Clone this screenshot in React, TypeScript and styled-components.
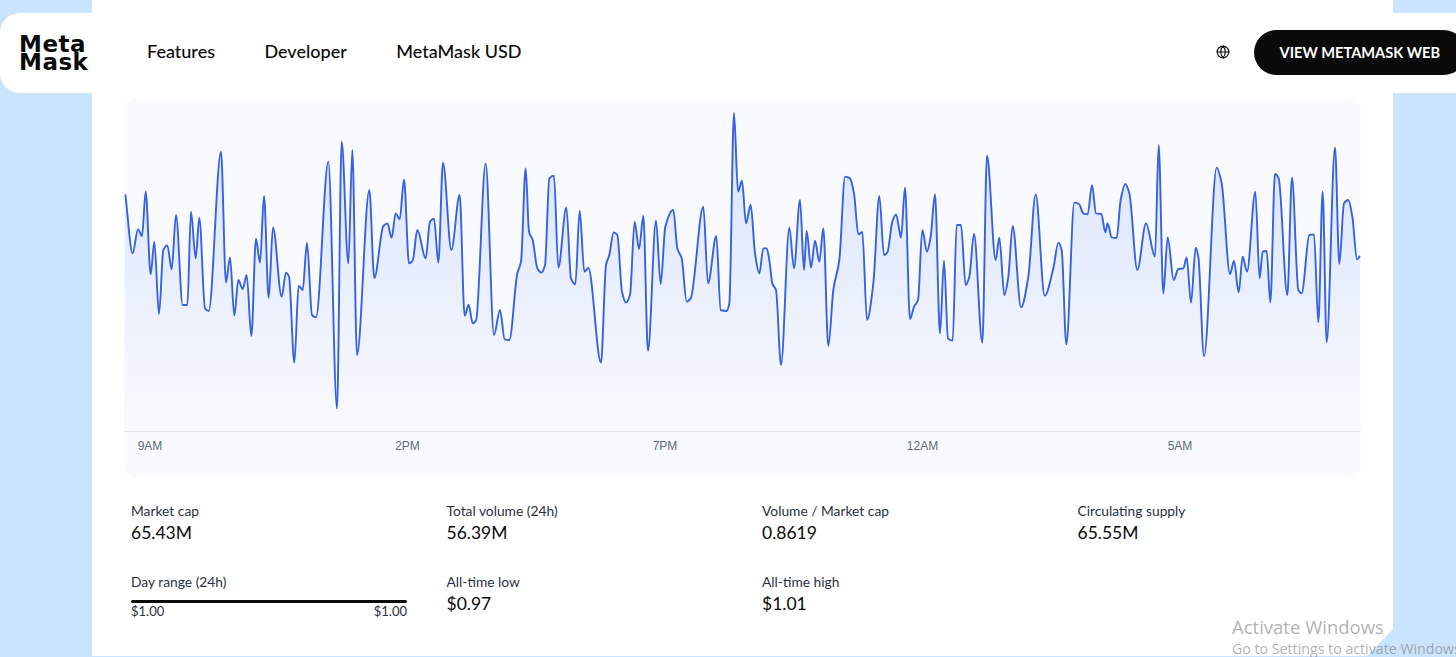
import React from "react";
import styled, { createGlobalStyle } from "styled-components";
import { Globe } from "lucide-react";

const GlobalStyle = createGlobalStyle`
  html, body { margin: 0; padding: 0; background: #cbe4fd; }
  body { font-family: "Lato", "Noto Sans", sans-serif; color: #0a0a0a; }
  #root { width: 1456px; height: 657px; overflow: hidden; position: relative; }
`;

const Page = styled.div`
  position: relative;
  width: 1456px;
  height: 657px;
  overflow: hidden;
  background: #cbe4fd;
`;

const Sheet = styled.main`
  box-sizing: border-box;
  width: 1301px;
  height: 656px;
  margin-left: 92px;
  padding: 99px 32px 0;
  background: #fff;
  clip-path: polygon(0 0, 100% 0, 100% 629px, 1275px 100%, 0 100%);
`;

const Nav = styled.header`
  position: absolute;
  top: 13px;
  left: 0;
  right: -40px;
  height: 80px;
  box-sizing: border-box;
  padding: 0 30px 2px 19px;
  display: flex;
  align-items: center;
  background: #fff;
  border-radius: 20px;
`;

const Logo = styled.div`
  width: 71px;
  margin-right: 57px;
  padding-top: 2px;
  font-family: "DejaVu Sans", "Noto Sans", sans-serif;
  font-size: 23px;
  font-weight: 700;
  line-height: 18px;
  letter-spacing: 0.5px;
  color: #0a0a0a;
`;

const NavLinks = styled.nav`
  display: flex;
  gap: 49.5px;
  padding-bottom: 2px;
`;

const NavLink = styled.a`
  font-size: 18px;
  font-weight: 500;
  color: #0a0a0a;
`;

const NavRight = styled.div`
  margin-left: auto;
  display: flex;
  align-items: center;
  gap: 24px;
`;

const GlobeIcon = styled(Globe)`
  width: 14px;
  height: 14px;
  stroke-width: 2;
  color: #0a0a0a;
`;

const CtaButton = styled.button`
  height: 45px;
  padding: 0 26px;
  border: 0;
  border-radius: 23px;
  background: #0a0a0a;
  color: #fff;
  font-family: inherit;
  font-size: 14.6px;
  font-weight: 700;
  white-space: nowrap;
`;

const ChartCard = styled.section`
  height: 378px;
  border-radius: 12px;
  background: #f9fafe;
  overflow: hidden;
`;

const ChartSvg = styled.svg`
  display: block;
  width: 1237px;
  height: 332px;
`;

const Axis = styled.div`
  box-sizing: border-box;
  height: 30px;
  padding: 7px 0 0 26px;
  display: flex;
  gap: 257.5px;
  border-top: 1px solid #e3e6ee;
`;

const Tick = styled.span`
  width: 0;
  display: flex;
  justify-content: center;
  white-space: nowrap;
  font-family: "Liberation Sans", Arial, sans-serif;
  font-size: 12px;
  line-height: 14px;
  color: #5e6a7d;
`;

const Stats = styled.section`
  display: grid;
  grid-template-columns: repeat(4, 315.5px);
  row-gap: 21px;
  padding: 25px 7px 0;
`;

const Stat = styled.div`
  display: flex;
  flex-direction: column;
  height: 50px;
`;

const Label = styled.span`
  font-size: 13.8px;
  line-height: 17px;
  color: #2b3040;
`;

const Value = styled.span`
  margin-top: 3px;
  font-size: 17.5px;
  line-height: 22px;
  color: #0a0a0a;
`;

const RangeCell = styled.div`
  width: 276px;
  display: flex;
  flex-direction: column;
`;

const RangeBar = styled.div`
  height: 3px;
  margin-top: 10px;
  border-radius: 2px;
  background: #0a0a0a;
`;

const RangeEnds = styled.div`
  display: flex;
  justify-content: space-between;
  font-size: 13px;
  line-height: 17px;
  color: #2b3040;
`;

const Watermark = styled.aside`
  position: absolute;
  left: 1232px;
  top: 614px;
  width: 240px;
  font-family: "Open Sans", "Noto Sans", sans-serif;
  color: rgba(110, 110, 110, 0.55);
  white-space: nowrap;
`;

const WatermarkTitle = styled.div`
  font-size: 18.5px;
  line-height: 25px;
`;

const WatermarkHint = styled.div`
  font-size: 14.2px;
  line-height: 20px;
`;

type Segment = { ox: number; pts: number[] };

const segments: Segment[] = [
  { ox: 110, pts: [46,283,68,460,84,388,96,408,107,275,122,523,133,425,147,642,160,450,172,436,185,508,198,345,218,615,232,615,243,335,257,475,268,354,285,625,296,633,333,155,348,547,360,472,373,647,385,540,398,567,410,525,424,708,438,416,450,488,462,288,476,594,489,382,515,590,528,518,537,530,553,788,566,557,578,570,591,428,606,645,618,652,655,185,681,926,695,125,715,490,727,150,741,765,778,270,793,534,820,378,832,370,845,413,857,340,869,358,882,238,897,490,908,482,922,390,947,475] },
  { ox: 420, pts: [30,365,42,356,55,488,69,188,94,450,119,285,134,647,146,614,158,670,168,662,197,190,222,705,240,630,254,718,268,720,292,520,303,485,317,205,327,395,338,420,352,505,364,518,375,495,388,235,402,227,415,503,439,322,453,535,466,553,479,332,493,515,505,504,543,788,558,495,568,465,581,397,592,405,606,575,618,608,630,585,644,365,657,447,670,348,684,752,708,362,722,552,736,380,760,330,772,445,785,475,800,605,812,595,850,320,864,550,889,408,902,630,920,633,928,610] },
  { ox: 730, pts: [12,38,24,275,36,242,48,370,62,314,75,460,88,520,100,445,110,445,118,480,127,550,138,570,153,795,178,383,192,505,210,300,222,510,230,393,243,503,255,422,268,485,280,385,295,738,310,570,328,480,345,230,360,235,372,280,385,403,397,396,411,660,430,550,448,288,462,465,472,458,487,365,498,343,507,385,513,413,525,263,540,657,552,620,564,600,577,390,591,455,602,410,615,283,630,700,642,482,654,715,668,722,680,375,693,375,707,555,718,530,732,402,757,728,771,167,797,480,808,413,823,585,835,530,848,378,873,622,895,530,917,283] },
  { ox: 1040, pts: [14,587,40,505,55,428,65,450,79,733,103,308,117,312,130,340,143,343,156,255,168,340,184,342,196,397,203,370,215,412,230,414,242,300,256,252,268,280,292,510,318,370,345,470,356,135,370,580,383,412,401,540,415,507,430,505,440,472,453,608,467,443,475,470,492,768,530,203,545,250,570,522,582,483,596,577,608,470,621,515,646,275,659,535,668,455,680,453,691,607,705,222,716,235,742,585,756,233,775,570,785,580,808,405,822,403,835,667,848,275,860,727,885,142,898,492,912,310,925,300,937,350,951,478,960,468] },
];

// Points in chart coordinates (the card's top-left is at 124,99 on the page).
const points: [number, number][] = segments.flatMap(({ ox, pts }) => {
  const out: [number, number][] = [];
  for (let i = 0; i < pts.length; i += 2) {
    out.push([ox + pts[i] / 3 - 124, 100 + pts[i + 1] / 3 - 99]);
  }
  return out;
});

// Monotone cubic interpolation, so that peaks stay at the measured points.
function monotonePath(p: [number, number][]): string {
  const n = p.length;
  const slopes: number[] = [];
  for (let i = 0; i < n - 1; i++) {
    slopes.push((p[i + 1][1] - p[i][1]) / (p[i + 1][0] - p[i][0]));
  }
  const tangents: number[] = [slopes[0]];
  for (let i = 1; i < n - 1; i++) {
    const a = slopes[i - 1];
    const b = slopes[i];
    if (a * b <= 0) tangents.push(0);
    else {
      const h0 = p[i][0] - p[i - 1][0];
      const h1 = p[i + 1][0] - p[i][0];
      tangents.push((3 * (h0 + h1)) / ((2 * h1 + h0) / a + (h1 + 2 * h0) / b));
    }
  }
  tangents.push(slopes[n - 2]);
  let d = `M${p[0][0].toFixed(2)} ${p[0][1].toFixed(2)}`;
  for (let i = 0; i < n - 1; i++) {
    const h = (p[i + 1][0] - p[i][0]) / 3;
    d += `C${(p[i][0] + h).toFixed(2)} ${(p[i][1] + h * tangents[i]).toFixed(2)} ${(p[i + 1][0] - h).toFixed(2)} ${(p[i + 1][1] - h * tangents[i + 1]).toFixed(2)} ${p[i + 1][0].toFixed(2)} ${p[i + 1][1].toFixed(2)}`;
  }
  return d;
}

const linePath = monotonePath(points);
const areaPath = `${linePath}L${points[points.length - 1][0].toFixed(2)} 332L${points[0][0].toFixed(2)} 332Z`;

const ticks = ["9AM", "2PM", "7PM", "12AM", "5AM"];

const topStats = [
  { label: "Market cap", value: "65.43M" },
  { label: "Total volume (24h)", value: "56.39M" },
  { label: "Volume / Market cap", value: "0.8619" },
  { label: "Circulating supply", value: "65.55M" },
];

const bottomStats = [
  { label: "All-time low", value: "$0.97" },
  { label: "All-time high", value: "$1.01" },
];

export default function App() {
  return (
    <Page>
      <GlobalStyle />
      <Sheet>
        <ChartCard>
          <ChartSvg viewBox="0 0 1237 332">
            <defs>
              <linearGradient id="areaFade" x1="0" y1="0" x2="0" y2="1">
                <stop offset="0" stopColor="#3a74ee" stopOpacity="0.18" />
                <stop offset="1" stopColor="#3a74ee" stopOpacity="0" />
              </linearGradient>
            </defs>
            <path d={areaPath} fill="url(#areaFade)" />
            <path d={linePath} fill="none" stroke="#3661e2" strokeWidth="1.9" strokeLinejoin="round" />
          </ChartSvg>
          <Axis>
            {ticks.map((t) => (
              <Tick key={t}>{t}</Tick>
            ))}
          </Axis>
        </ChartCard>
        <Stats>
          {topStats.map((s) => (
            <Stat key={s.label}>
              <Label>{s.label}</Label>
              <Value>{s.value}</Value>
            </Stat>
          ))}
          <Stat>
            <RangeCell>
              <Label>Day range (24h)</Label>
              <RangeBar />
              <RangeEnds>
                <span>$1.00</span>
                <span>$1.00</span>
              </RangeEnds>
            </RangeCell>
          </Stat>
          {bottomStats.map((s) => (
            <Stat key={s.label}>
              <Label>{s.label}</Label>
              <Value>{s.value}</Value>
            </Stat>
          ))}
        </Stats>
      </Sheet>
      <Nav>
        <Logo>
          Meta
          <br />
          Mask
        </Logo>
        <NavLinks>
          <NavLink>Features</NavLink>
          <NavLink>Developer</NavLink>
          <NavLink>MetaMask USD</NavLink>
        </NavLinks>
        <NavRight>
          <GlobeIcon />
          <CtaButton>VIEW METAMASK WEB</CtaButton>
        </NavRight>
      </Nav>
      <Watermark>
        <WatermarkTitle>Activate Windows</WatermarkTitle>
        <WatermarkHint>Go to Settings to activate Windows.</WatermarkHint>
      </Watermark>
    </Page>
  );
}
